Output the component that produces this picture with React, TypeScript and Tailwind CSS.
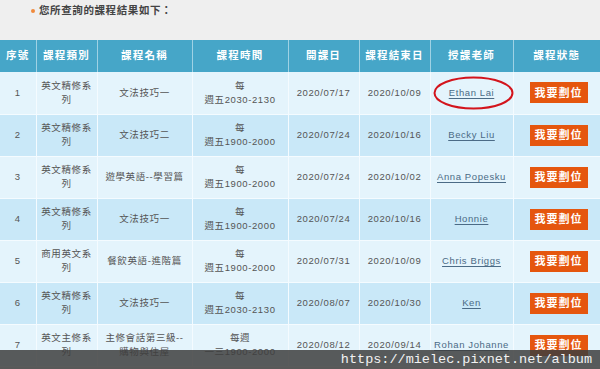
const cols = [36, 61, 95, 96, 71, 71, 83, 87];

const heads = ["序號", "課程類別", "課程名稱", "課程時間", "開課日", "課程結束日", "授課老師", "課程狀態"];

const rows = [
  { no: "1", cat: "英文精修系列", name: "文法技巧一", t1: "每", t2: "週五2030-2130", start: "2020/07/17", end: "2020/10/09", teacher: "Ethan Lai" },
  { no: "2", cat: "英文精修系列", name: "文法技巧二", t1: "每", t2: "週五1900-2000", start: "2020/07/24", end: "2020/10/16", teacher: "Becky Liu" },
  { no: "3", cat: "英文精修系列", name: "遊學英語--學習篇", t1: "每", t2: "週五1900-2000", start: "2020/07/24", end: "2020/10/02", teacher: "Anna Popesku" },
  { no: "4", cat: "英文精修系列", name: "文法技巧一", t1: "每", t2: "週五1900-2000", start: "2020/07/24", end: "2020/10/16", teacher: "Honnie" },
  { no: "5", cat: "商用英文系列", name: "餐飲英語-進階篇", t1: "每", t2: "週五1900-2000", start: "2020/07/31", end: "2020/10/09", teacher: "Chris Briggs" },
  { no: "6", cat: "英文精修系列", name: "文法技巧一", t1: "每", t2: "週五2030-2130", start: "2020/08/07", end: "2020/10/30", teacher: "Ken" },
  { no: "7", cat: "英文主修系列", name: "主修會話第三級--購物與住屋", t1: "每週", t2: "一三1900-2000", start: "2020/08/12", end: "2020/09/14", teacher: "Rohan Johanne" },
];

const font = { fontFamily: '"Liberation Sans", Arial, "Noto Sans CJK TC", sans-serif' };

export default function App() {
  return (
    <div className="relative h-[369px] w-[600px] overflow-hidden bg-[#efefef]" style={font}>
      <div className="flex h-[40px] items-start pl-[31px] pt-[3px]">
        <span className="mt-[6px] mr-[4px] h-[4px] w-[4px] rounded-full bg-[#f08a3c]" />
        <span className="text-[10.5px] font-bold leading-[14px] tracking-[0.6px] text-[#444]">您所查詢的課程結果如下：</span>
      </div>

      <table className="w-[600px] table-fixed border-collapse">
        <colgroup>
          {cols.map((w, i) => (
            <col key={i} style={{ width: w }} />
          ))}
        </colgroup>
        <thead>
          <tr className="h-[32px] bg-[#46a6c8]">
            {heads.map((h, i) => (
              <th
                key={h}
                className={`p-0 text-center text-[10.5px] font-bold tracking-[1.2px] text-white ${i < 7 ? "border-r border-[#9fd2e4]" : ""}`}
              >
                {h}
              </th>
            ))}
          </tr>
        </thead>
        <tbody>
          {rows.map((r, i) => (
            <tr key={r.no} className={`h-[42px] text-[9.5px] leading-[14px] tracking-[0.6px] text-[#555] ${i % 2 === 0 ? "bg-[#e4f4fc]" : "bg-[#c9e8f8]"}`}>
              <td className="border-r border-b border-[#f4fbff] p-0 text-center">{r.no}</td>
              <td className="border-r border-b border-[#f4fbff] px-[2px] text-center">{r.cat}</td>
              <td className="border-r border-b border-[#f4fbff] px-[6px] text-center">{r.name}</td>
              <td className="border-r border-b border-[#f4fbff] p-0 text-center">
                <div>{r.t1}</div>
                <div>{r.t2}</div>
              </td>
              <td className="border-r border-b border-[#f4fbff] p-0 text-center">{r.start}</td>
              <td className="border-r border-b border-[#f4fbff] p-0 text-center">{r.end}</td>
              <td className="relative border-r border-b border-[#f4fbff] p-0 text-center">
                <span className="text-[#4b6b86] underline underline-offset-2">{r.teacher}</span>
                {i === 0 && (
                  <svg className="absolute left-[2px] top-[4px]" width="81" height="34" viewBox="0 0 81 34">
                    <ellipse cx="40.5" cy="17" rx="39" ry="15.5" fill="none" stroke="#d3141c" strokeWidth="2" />
                  </svg>
                )}
              </td>
              <td className="border-b border-[#f4fbff] p-0">
                <div className="ml-[16px] flex h-[21px] w-[58px] items-center justify-center bg-[#e5560e] text-[11px] font-bold tracking-[1px] text-white">
                  我要劃位
                </div>
              </td>
            </tr>
          ))}
        </tbody>
      </table>

      <div className="absolute bottom-0 left-0 flex h-[19px] w-[600px] items-center justify-end bg-[#3e3e3e]/85 pr-[8px]">
        <span className="text-[13.5px] leading-[19px] text-[#f2f2f2]" style={{ fontFamily: '"Liberation Mono", "Courier New", monospace' }}>
          https://mielec.pixnet.net/album
        </span>
      </div>
    </div>
  );
}
